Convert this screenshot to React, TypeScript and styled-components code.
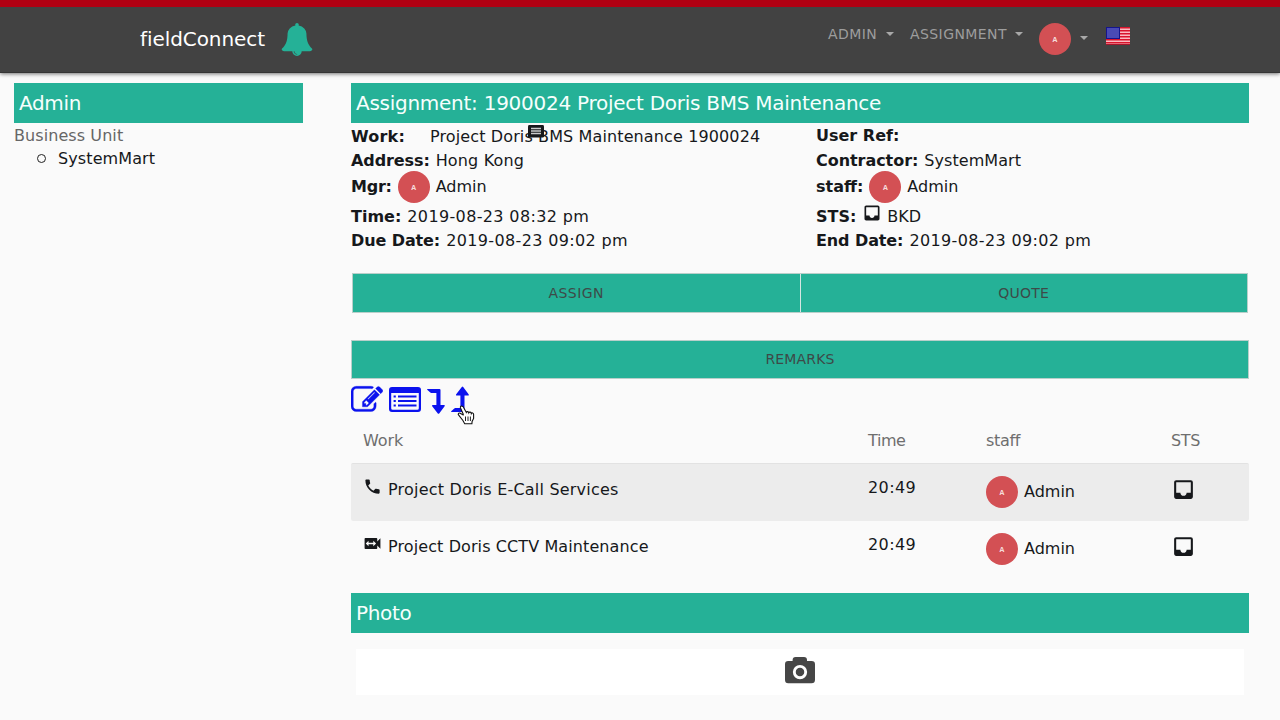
import React from 'react';
import styled, { createGlobalStyle } from 'styled-components';
import { MdInbox, MdPhone, MdSwitchVideo } from 'react-icons/md';

const teal = '#25b197';

const Global = createGlobalStyle`
  * { box-sizing: border-box; }
  body {
    margin: 0;
    height: 720px;
    overflow: hidden;
    background: #fafafa;
    color: #16181b;
    font-family: Verdana, "DejaVu Sans", sans-serif;
    font-size: 16px;
  }
`;

const Text = styled.span<{ $ls?: number }>`
  white-space: nowrap;
  letter-spacing: ${p => p.$ls ?? 0}px;
`;

const Label = styled(Text)`
  font-weight: 700;
`;

const Header = styled.header`
  position: relative;
  display: flex;
  height: 73px;
  padding: 0 149px 0 140px;
  background: #424242;
  border-top: 7px solid #b00012;
  border-bottom: 1px solid #353535;
  box-shadow: 0 1px 4px rgba(0, 0, 0, 0.55);
`;

const Brand = styled.a`
  display: flex;
  flex: 1;
  height: 64px;
  align-items: center;
  gap: 15px;
  color: #fff;
  font-size: 20px;
`;

const Nav = styled.nav`
  display: flex;
  color: #9d9d9d;
  font-size: 14px;
  line-height: 20px;
  padding-top: 16px;
`;

const NavItem = styled.div<{ $w: number; $gap: number; $top?: number }>`
  display: flex;
  width: ${p => p.$w}px;
  height: 32px;
  margin-top: ${p => p.$top ?? 0}px;
  gap: ${p => p.$gap}px;
`;

const Caret = styled.i<{ $top?: number }>`
  width: 0;
  height: 0;
  margin-top: ${p => p.$top ?? 8}px;
  border: 4px solid transparent;
  border-top-color: #a8a8a8;
  border-bottom: 0;
`;

const Avatar = styled.span`
  display: flex;
  flex: none;
  width: 32px;
  height: 32px;
  border-radius: 50%;
  align-items: center;
  justify-content: center;
  background: #d35054;
  color: #f6dcdc;
  font: 700 7px/1 "Open Sans", sans-serif;
  padding-top: 1px;
`;

const Body = styled.div`
  display: flex;
  gap: 48px;
  padding: 10px 31px 0 14px;
`;

const Sidebar = styled.aside`
  width: 289px;
`;

const Main = styled.main`
  width: 898px;
`;

const Bar = styled.h2<{ $top?: number }>`
  display: flex;
  align-items: center;
  height: 40px;
  margin: ${p => p.$top ?? 0}px 0 0;
  padding: 0 0 0 5px;
  background: ${teal};
  color: #f6fffd;
  font-size: 20px;
  font-weight: 400;
`;

const UnitTitle = styled.div`
  padding-top: 1px;
  color: #666;
  line-height: 23px;
`;

const UnitList = styled.ul`
  margin: 0;
  padding-left: 42px;
  list-style: none;
`;

const Unit = styled.li`
  display: flex;
  align-items: center;
  height: 22px;
  margin-left: -19px;
  gap: 12px;
  &::before {
    content: '';
    width: 7px;
    height: 7px;
    border: 1px solid #222;
    border-radius: 50%;
  }
`;

const Details = styled.section`
  display: grid;
  grid-template-columns: 465px 1fr;
  grid-template-rows: 25px 24px 29px 29px 20px;
  height: 129px;
`;

const Cell = styled.div<{ $gap?: number; $top?: number }>`
  position: relative;
  display: flex;
  align-items: center;
  gap: ${p => p.$gap ?? 6}px;
  padding-top: ${p => p.$top ?? 0}px;
  svg { flex: none; }
`;

const Note = styled.span`
  position: absolute;
  left: 177px;
  top: 2px;
  line-height: 0;
`;

const Lift = styled.span<{ $y: number }>`
  display: flex;
  margin-top: ${p => p.$y}px;
`;

const Buttons = styled.div<{ $top: number; $h?: number; $right?: number; $left?: number }>`
  display: flex;
  gap: 1px;
  height: ${p => p.$h ?? 40}px;
  margin: ${p => p.$top}px ${p => p.$right ?? 0}px 0 ${p => p.$left ?? 0}px;
  border: 1px solid #b9cfca;
  background: #d5e6e2;
`;

const Button = styled.button`
  flex: 1;
  padding: 0 0 1px;
  border: 0;
  background: ${teal};
  color: #3d4a48;
  font: inherit;
  font-size: 14px;
`;

const Tools = styled.div`
  position: relative;
  display: flex;
  height: 41px;
  padding-top: 5px;
  gap: 6px;
  align-items: flex-start;
  color: #0b12ee;
`;

const Pointer = styled.svg`
  position: absolute;
  left: 106px;
  top: 26px;
`;

const Row = styled.div<{ $h: number; $shade?: boolean; $head?: boolean }>`
  display: grid;
  grid-template-columns: 505px 118px 185px 1fr;
  height: ${p => p.$h}px;
  padding: ${p => (p.$head ? 9 : 0)}px 0 0 12px;
  color: ${p => (p.$head ? '#6e6e6e' : 'inherit')};
  line-height: 22px;
  background: ${p => (p.$shade ? '#ececec' : 'transparent')};
  border-top: 1px solid ${p => (p.$shade ? '#e2e2e2' : 'transparent')};
  border-radius: 2px;
`;

const Col = styled.div<{ $top: number }>`
  display: flex;
  height: 32px;
  align-items: center;
  gap: 6px;
  margin-top: ${p => p.$top}px;
`;

const PhotoBox = styled.div`
  display: flex;
  height: 46px;
  margin: 16px 5px 0 5px;
  align-items: center;
  justify-content: center;
  padding-bottom: 3px;
  background: #fff;
`;

const Bell = () => (
  <svg width="34" height="33" viewBox="0 0 1792 1792" fill={teal}>
    <path d="M912 1696q0-16-16-16-59 0-101.5-42.5t-42.5-101.5q0-16-16-16t-16 16q0 73 51.5 124.5t124.5 51.5q16 0 16-16zm816-288q0 52-38 90t-90 38h-448q0 106-75 181t-181 75-181-75-75-181h-448q-52 0-90-38t-38-90q50-42 91-88t85-119.5 74.5-158.5 50-206 19.5-260q0-152 117-282.5t307-158.5q-8-19-8-39 0-40 28-68t68-28 68 28 28 68q0 20-8 39 190 28 307 158.5t117 282.5q0 139 19.5 260t50 206 74.5 158.5 85 119.5 91 88z" />
  </svg>
);

const Flag = () => (
  <svg width="24" height="18" viewBox="0 0 24 18">
    <rect width="24" height="18" fill="#fbb9c0" />
    {[0, 3, 6, 9, 12, 15].map(y => (
      <rect key={y} y={y} width="24" height="1.5" fill="#d9142c" />
    ))}
    <rect y="17" width="24" height="1" fill="#a5152a" />
    <rect width="14" height="12" fill="#15158c" />
    <rect x="1" y="1" width="12" height="10" fill="#4a4ab5" />
  </svg>
);

const NoteIcon = () => (
  <svg width="16" height="13" viewBox="0 0 16 13">
    <rect width="16" height="12.6" rx="1.4" fill="#16181b" />
    <path d="M3 3.500h10M3 6h10M3 8.500h10" stroke="#c9cacb" strokeWidth="1.500" />
  </svg>
);

const CameraIcon = () => (
  <svg width="30" height="27" viewBox="0 0 30 27">
    <path
      d="M3.200 4H7.600V3q0-3 3-3h8.400q3 0 3 3v1h4.500q3.500 0 3.500 3.300v15.400q0 3.600-3.500 3.600H3.200Q0 26.300 0 22.700V7.300Q0 4 3.200 4z"
      fill="#464646"
    />
    <circle cx="15" cy="15.100" r="5.700" fill="none" stroke="#fff" strokeWidth="2.900" />
  </svg>
);

const EditIcon = () => (
  <svg width="32" height="32" viewBox="0 0 1792 1792" fill="currentColor" stroke="currentColor" strokeWidth="18">
    <path d="M888 1184l116-116-152-152-116 116v56h96v96h56zm440-720q-16-16-33 1l-350 350q-17 17-1 33t33-1l350-350q17-17 1-33zm80 594v190q0 119-84.5 203.5t-203.5 84.5h-832q-119 0-203.5-84.5t-84.5-203.5v-832q0-119 84.5-203.5t203.5-84.5h832q63 0 117 25 15 7 18 23 3 17-9 29l-49 49q-14 14-32 8-23-6-45-6h-832q-66 0-113 47t-47 113v832q0 66 47 113t113 47h832q66 0 113-47t47-113v-126q0-13 9-22l64-64q15-15 35-7t20 29zm-96-738l288 288-672 672h-288v-288zm444 132l-92 92-288-288 92-92q28-28 68-28t68 28l152 152q28 28 28 68t-28 68z" />
  </svg>
);

const ListIcon = () => (
  <svg width="32" height="32" viewBox="0 0 32 32" fill="currentColor">
    <path fillRule="evenodd" d="M3 3h26a3 3 0 0 1 3 3v19a3 3 0 0 1-3 3H3a3 3 0 0 1-3-3V6a3 3 0 0 1 3-3zm-.8 6v15.300q0 1.500 1.500 1.500h24.600q1.500 0 1.500-1.500V9z" />
    <path d="M4.600 11.400h2.200v2H4.600zM4.600 16h2.200v2H4.600zM4.600 20.600h2.200v2H4.600zM9 11.400h18.500v2H9zM9 16h18.500v2H9zM9 20.600h18.500v2H9z" />
  </svg>
);

const LevelDown = () => (
  <svg width="18" height="32" viewBox="0 0 18 32" fill="currentColor">
    <path d="M.5 5H12.500q1 0 1 1V21H17q1.300 0 .6 1.200L12.200 29.400q-.7.900-1.400 0L5.200 22.200q-.6-1.200.6-1.200H9.400V9H4.200q-.5 0-.9-.4L.2 5.700Q0 5 .5 5z" />
  </svg>
);

const LevelUp = () => (
  <svg width="18" height="32" viewBox="0 0 18 32" fill="currentColor">
    <path d="M.5 28H12.500q1 0 1-1V11.500H17q1.300 0 .6-1.200L12.200 3q-.7-.9-1.400 0L5.200 10.300q-.6 1.200.6 1.200H9.400V24H4.200q-.5 0-.9.4L.2 27.300Q0 28 .5 28z" />
  </svg>
);

const Hand = () => (
  <Pointer width="18" height="20" viewBox="0 0 18 20">
    <path
      d="M5.200 1.200C4 .6 3 1.800 3.500 3l2.800 6.200-.2.700L3.200 8.300C1.600 7.500.6 9 1.700 10.200l4.200 5.300 1.800 3.300h7.200l.2-2.400 1.500-3V9.200c0-1.400-1.800-1.800-2.300-.7-.2-1.600-2-1.800-2.500-.7-.4-1.500-2.200-1.500-2.500-.4L6.600 2.400q-.4-.9-1.400-1.200z"
      fill="#fff"
      stroke="#111"
      strokeWidth="1.100"
    />
    <path d="M8.500 11.500v4.500M11 11.500v4.500M13.400 11.500v4.500" stroke="#222" strokeWidth="1" />
  </Pointer>
);

export default function App() {
  return (
    <>
      <Global />
      <Header>
        <Brand>
          <Text $ls={-0.08}>fieldConnect</Text>
          <Bell />
        </Brand>
        <Nav>
          <NavItem $w={82} $gap={8.5} $top={1}><Text $ls={0.45}>ADMIN</Text><Caret /></NavItem>
          <NavItem $w={129} $gap={8} $top={1}><Text $ls={0.42}>ASSIGNMENT</Text><Caret /></NavItem>
          <NavItem $w={67} $gap={9}><Avatar>A</Avatar><Caret $top={13} /></NavItem>
          <NavItem $w={25} $gap={0} $top={4}><Flag /></NavItem>
        </Nav>
      </Header>
      <Body>
        <Sidebar>
          <Bar><Text $ls={-0.35}>Admin</Text></Bar>
          <UnitTitle><Text $ls={0.08}>Business Unit</Text></UnitTitle>
          <UnitList><Unit><Text $ls={0.1}>SystemMart</Text></Unit></UnitList>
        </Sidebar>
        <Main>
          <Bar><Text $ls={-0.265}>Assignment: 1900024 Project Doris BMS Maintenance</Text></Bar>
          <Details>
            <Cell $gap={25} $top={2}>
              <Label $ls={0.2}>Work:</Label><Text $ls={0.12}>Project Doris BMS Maintenance 1900024</Text>
              <Note><NoteIcon /></Note>
            </Cell>
            <Cell><Label>User Ref:</Label></Cell>
            <Cell><Label $ls={-0.1}>Address:</Label><Text $ls={0.15}>Hong Kong</Text></Cell>
            <Cell><Label $ls={-0.05}>Contractor:</Label><Text $ls={0.05}>SystemMart</Text></Cell>
            <Cell $gap={6}><Label $ls={-0.25}>Mgr:</Label><Avatar>A</Avatar><Text>Admin</Text></Cell>
            <Cell><Label>staff:</Label><Avatar>A</Avatar><Text>Admin</Text></Cell>
            <Cell $top={1}><Label>Time:</Label><Text $ls={0.36}>2019-08-23 08:32 pm</Text></Cell>
            <Cell $gap={5.5} $top={2}><Label>STS:</Label><Lift $y={-7}><MdInbox size={20} /></Lift><Text>BKD</Text></Cell>
            <Cell><Label $ls={-0.1}>Due Date:</Label><Text $ls={0.36}>2019-08-23 09:02 pm</Text></Cell>
            <Cell><Label $ls={-0.1}>End Date:</Label><Text $ls={0.36}>2019-08-23 09:02 pm</Text></Cell>
          </Details>
          <Buttons $top={21} $left={1} $right={1}>
            <Button><Text $ls={0.45}>ASSIGN</Text></Button>
            <Button><Text $ls={0.25}>QUOTE</Text></Button>
          </Buttons>
          <Buttons $top={27} $h={39}><Button><Text $ls={0.15}>REMARKS</Text></Button></Buttons>
          <Tools>
            <EditIcon /><ListIcon /><LevelDown /><LevelUp /><Hand />
          </Tools>
          <Row $h={43} $head>
            <Text $ls={-0.1}>Work</Text><Text $ls={-0.4}>Time</Text><Text $ls={-0.3}>staff</Text><Text $ls={-0.3}>STS</Text>
          </Row>
          <Row $h={58} $shade>
            <Col $top={10}><Lift $y={-7}><MdPhone size={19} /></Lift><Text $ls={0.2}>Project Doris E-Call Services</Text></Col>
            <Col $top={8}><Text $ls={0.4}>20:49</Text></Col>
            <Col $top={12}><Avatar>A</Avatar><Text>Admin</Text></Col>
            <Col $top={9}><MdInbox size={25} /></Col>
          </Row>
          <Row $h={57}>
            <Col $top={9}><Lift $y={-7}><MdSwitchVideo size={19} /></Lift><Text $ls={0.1}>Project Doris CCTV Maintenance</Text></Col>
            <Col $top={7}><Text $ls={0.4}>20:49</Text></Col>
            <Col $top={11}><Avatar>A</Avatar><Text>Admin</Text></Col>
            <Col $top={8}><MdInbox size={25} /></Col>
          </Row>
          <Bar $top={15}><Text $ls={-0.35}>Photo</Text></Bar>
          <PhotoBox><CameraIcon /></PhotoBox>
        </Main>
      </Body>
    </>
  );
}
